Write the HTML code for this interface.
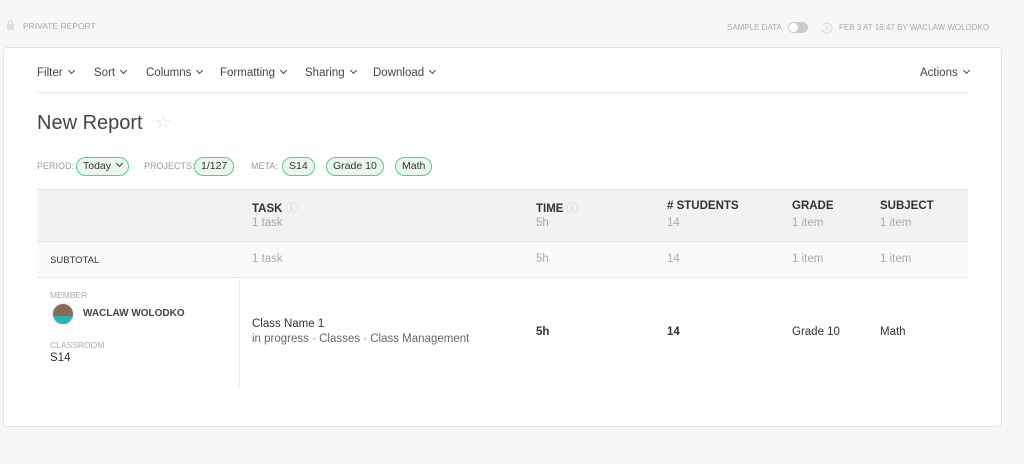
<!DOCTYPE html>
<html><head><style>
*{margin:0;padding:0;box-sizing:border-box}
body{width:1024px;height:464px;background:#f7f7f7;font-family:"Liberation Sans",sans-serif;color:#333;position:relative;overflow:hidden}
.a{position:absolute;white-space:nowrap}
.sm{font-size:8.5px;color:#aaa}
.card{position:absolute;left:3px;top:47px;width:999px;height:380px;background:#fff;border:1px solid #e4e4e4;border-radius:4px}
.menu{font-size:11.5px;color:#444;top:67px}
.chev{display:inline-block;width:5px;height:5px;border-right:1.5px solid #444;border-bottom:1.5px solid #444;transform:rotate(45deg);margin-left:6px;position:relative;top:-3px}
.pill{position:absolute;top:157px;height:19px;border:1.5px solid #5cc98a;background:#eaf7ef;border-radius:10px;font-size:10.5px;color:#333;padding:0 6px;line-height:16px}
.lbl{font-size:9px;color:#999;top:161px}
.h{font-size:11.5px;color:#333;font-weight:bold}
.g{font-size:11.5px;color:#aaa}
.b{font-size:11.5px;color:#333}
</style></head><body>
<svg class="a" style="left:6px;top:20px" width="9" height="11"><rect x="1" y="4" width="7" height="6" fill="#ddd"/><path d="M2.5 4V2.5a2 2 0 0 1 4 0V4" stroke="#ddd" fill="none" stroke-width="1.3"/></svg>
<div class="a sm" style="left:23px;top:21px">PRIVATE REPORT</div>
<div class="a sm" style="left:727px;top:23px;font-size:8px">SAMPLE DATA</div>
<div class="a" style="left:788px;top:22px;width:20px;height:11px;border-radius:6px;background:#ccc"><div style="position:absolute;left:1px;top:1px;width:9px;height:9px;border-radius:50%;background:#fff"></div></div>
<svg class="a" style="left:820px;top:21px" width="14" height="14"><path d="M3 4a5 5 0 1 1-1 4" stroke="#ddd" fill="none" stroke-width="1.3"/><path d="M7 4v3.5l2 1" stroke="#ddd" fill="none" stroke-width="1.2"/></svg>
<div class="a sm" style="left:839px;top:23px;font-size:8px">FEB 3 AT 18:47 BY WACLAW WOLODKO</div>
<div class="card"></div>
<div class="a menu" style="left:37px">Filter<span class="chev"></span></div>
<div class="a menu" style="left:94px">Sort<span class="chev"></span></div>
<div class="a menu" style="left:146px">Columns<span class="chev"></span></div>
<div class="a menu" style="left:220px">Formatting<span class="chev"></span></div>
<div class="a menu" style="left:305px">Sharing<span class="chev"></span></div>
<div class="a menu" style="left:373px">Download<span class="chev"></span></div>
<div class="a menu" style="left:920px">Actions<span class="chev"></span></div>
<div class="a" style="left:37px;top:92px;width:931px;height:1px;background:#e8e8e8"></div>
<div class="a" style="left:37px;top:112px;font-size:20px;color:#444">New Report</div>
<div class="a" style="left:155px;top:112px;font-size:18px;color:#ddd">☆</div>
<div class="a lbl" style="left:37px">PERIOD:</div>
<div class="pill" style="left:76px">Today<span class="chev" style="border-color:#333"></span></div>
<div class="a lbl" style="left:144px">PROJECTS:</div>
<div class="pill" style="left:194px">1/127</div>
<div class="a lbl" style="left:251px">META:</div>
<div class="pill" style="left:282px">S14</div>
<div class="pill" style="left:326px">Grade 10</div>
<div class="pill" style="left:395px">Math</div>
<div class="a" style="left:37px;top:189px;width:931px;height:52px;background:#f2f2f2;border-top:1px solid #e4e4e4"></div>
<div class="a" style="left:37px;top:241px;width:931px;height:37px;background:#fafafa;border-top:1px solid #e4e4e4;border-bottom:1px solid #e8e8e8"></div>
<div class="a h" style="left:252px;top:200px">TASK <span style="color:#ccc;font-weight:normal">ⓘ</span></div><div class="a g" style="left:252px;top:217px">1 task</div>
<div class="a h" style="left:536px;top:200px">TIME <span style="color:#ccc;font-weight:normal">ⓘ</span></div><div class="a g" style="left:536px;top:217px">5h</div>
<div class="a h" style="left:667px;top:200px"># STUDENTS</div><div class="a g" style="left:667px;top:217px">14</div>
<div class="a h" style="left:792px;top:200px">GRADE</div><div class="a g" style="left:792px;top:217px">1 item</div>
<div class="a h" style="left:880px;top:200px">SUBJECT</div><div class="a g" style="left:880px;top:217px">1 item</div>
<div class="a" style="left:50px;top:255px;font-size:9.5px;color:#333">SUBTOTAL</div>
<div class="a g" style="left:252px;top:253px">1 task</div><div class="a g" style="left:536px;top:253px">5h</div><div class="a g" style="left:667px;top:253px">14</div><div class="a g" style="left:792px;top:253px">1 item</div><div class="a g" style="left:880px;top:253px">1 item</div>
<div class="a" style="left:239px;top:279px;width:1px;height:107px;background:#e8e8e8"></div>
<div class="a sm" style="left:50px;top:290px">MEMBER</div>
<div class="a" style="left:52px;top:303px;width:22px;height:22px;border-radius:50%;background:#8a6a5a;border:1px solid #eee;overflow:hidden"><div style="position:absolute;left:0;bottom:0;width:22px;height:8px;background:#2fb3b0"></div></div>
<div class="a" style="left:83px;top:308px;font-size:10px;font-weight:bold;color:#444">WACLAW WOLODKO</div>
<div class="a sm" style="left:50px;top:340px">CLASSROOM</div>
<div class="a b" style="left:50px;top:352px">S14</div>
<div class="a b" style="left:252px;top:318px">Class Name 1</div>
<div class="a" style="left:252px;top:333px;font-size:11.5px;color:#666">in progress · Classes · Class Management</div>
<div class="a h" style="left:536px;top:326px">5h</div>
<div class="a h" style="left:667px;top:326px">14</div>
<div class="a b" style="left:792px;top:326px">Grade 10</div>
<div class="a b" style="left:880px;top:326px">Math</div>
</body></html>
